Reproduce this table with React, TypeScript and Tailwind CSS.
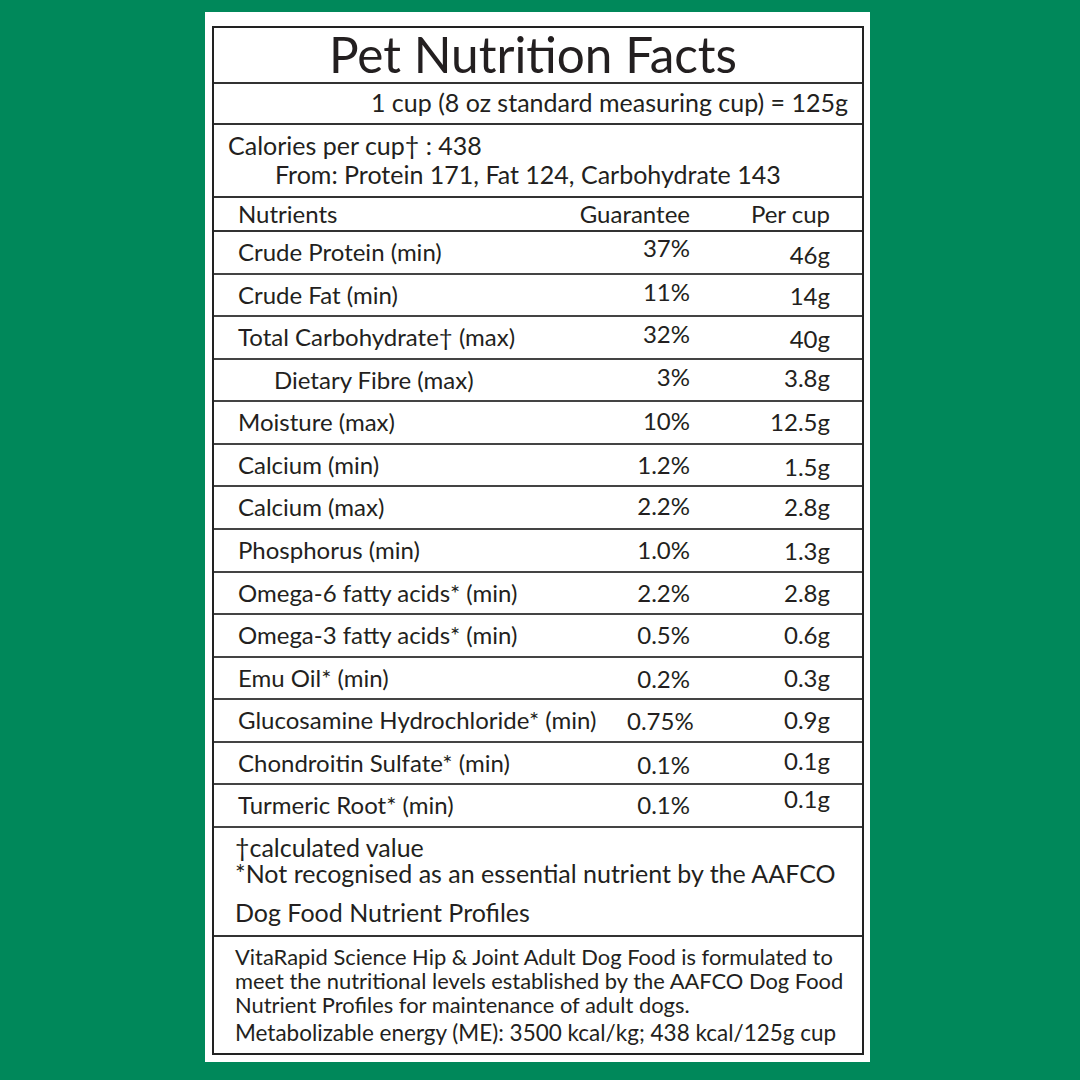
type Row = { label: string; g: string; p: string; indent?: boolean; go: number; po: number };

const rows: Row[] = [
  { label: "Crude Protein (min)", g: "37%", p: "46g", go: -4.5, po: 2.5 },
  { label: "Crude Fat (min)", g: "11%", p: "14g", go: -3, po: 1 },
  { label: "Total Carbohydrate† (max)", g: "32%", p: "40g", go: -3, po: 1.5 },
  { label: "Dietary Fibre (max)", g: "3%", p: "3.8g", indent: true, go: -3, po: -1.5 },
  { label: "Moisture (max)", g: "10%", p: "12.5g", go: -1, po: 0 },
  { label: "Calcium (min)", g: "1.2%", p: "1.5g", go: 0, po: 2 },
  { label: "Calcium (max)", g: "2.2%", p: "2.8g", go: -1.5, po: 0 },
  { label: "Phosphorus (min)", g: "1.0%", p: "1.3g", go: 0, po: 1.5 },
  { label: "Omega-6 fatty acids* (min)", g: "2.2%", p: "2.8g", go: 0, po: 0 },
  { label: "Omega-3 fatty acids* (min)", g: "0.5%", p: "0.6g", go: 0, po: 0 },
  { label: "Emu Oil* (min)", g: "0.2%", p: "0.3g", go: 1.5, po: 0 },
  { label: "Glucosamine Hydrochloride* (min)", g: "0.75%", p: "0.9g", go: 1, po: 0 },
  { label: "Chondroitin Sulfate* (min)", g: "0.1%", p: "0.1g", go: 2, po: -1.5 },
  { label: "Turmeric Root* (min)", g: "0.1%", p: "0.1g", go: 0, po: -6 },
];

export default function App() {
  return (
    <div
      className="w-[1080px] h-[1080px] bg-[#00885a] pl-[205px] pt-[12px] text-[#231f20]"
      style={{ fontFamily: "Lato, 'Open Sans', sans-serif" }}
    >
      <div className="w-[665px] h-[1050px] bg-white pl-[7px] pt-[14px]">
        <div className="w-[652px] h-[1029px] border-2 border-[#222] flex flex-col">
          {/* Title */}
          <div className="h-[56px] shrink-0 border-b-2 border-[#333] flex justify-center pr-[10px] pt-[1px]">
            <span className="text-[49.5px] leading-[50px] whitespace-nowrap">Pet Nutrition Facts</span>
          </div>
          {/* Serving */}
          <div className="h-[41px] shrink-0 border-b-2 border-[#333] flex justify-end pr-[14px] pt-[5.5px]">
            <span className="text-[25px] leading-[25px] whitespace-nowrap">
              1 cup (8 oz standard measuring cup) = 125g
            </span>
          </div>
          {/* Calories */}
          <div className="h-[73px] shrink-0 border-b-2 border-[#333] pt-[6px] text-[25px] leading-[29px] whitespace-nowrap">
            <div className="pl-[14px]">Calories per cup† : 438</div>
            <div className="pl-[61px]">From: Protein 171, Fat 124, Carbohydrate 143</div>
          </div>
          {/* Header */}
          <div className="h-[34px] shrink-0 border-b-2 border-[#333] flex pl-[24px] pr-[32px] pt-[3.5px] text-[24px] leading-[24px]">
            <div className="flex-1">Nutrients</div>
            <div className="w-[150px] text-right">Guarantee</div>
            <div className="w-[140px] text-right">Per cup</div>
          </div>
          {/* Rows */}
          {rows.map((row) => (
            <div
              key={row.label}
              className="h-[42.57px] shrink-0 border-b-2 border-[#444] flex pr-[32px] pt-[8px] text-[24px] leading-[24px]"
            >
              <div className={row.indent ? "flex-1 pl-[60px] whitespace-nowrap" : "flex-1 pl-[24px] whitespace-nowrap"}>
                {row.label}
              </div>
              <div className="w-[100px] text-right relative" style={{ top: row.go }}>
                {row.g}
              </div>
              <div className="w-[140px] text-right relative" style={{ top: row.po }}>
                {row.p}
              </div>
            </div>
          ))}
          {/* Footnotes */}
          <div className="h-[109px] shrink-0 border-b-2 border-[#333] pl-[21px] pt-[6px] text-[25px] leading-[26px] whitespace-nowrap">
            <div>†calculated value</div>
            <div>*Not recognised as an essential nutrient by the AAFCO</div>
            <div className="mt-[13px]">Dog Food Nutrient Profiles</div>
          </div>
          {/* Bottom */}
          <div className="flex-1 pl-[21px] pt-[8px] leading-[24px] whitespace-nowrap">
            <div className="text-[21.9px]">VitaRapid Science Hip &amp; Joint Adult Dog Food is formulated to</div>
            <div className="text-[21.9px]">meet the nutritional levels established by the AAFCO Dog Food</div>
            <div className="text-[21.9px]">Nutrient Profiles for maintenance of adult dogs.</div>
            <div className="mt-[4px] text-[22.5px]">Metabolizable energy (ME): 3500 kcal/kg; 438 kcal/125g cup</div>
          </div>
        </div>
      </div>
    </div>
  );
}
